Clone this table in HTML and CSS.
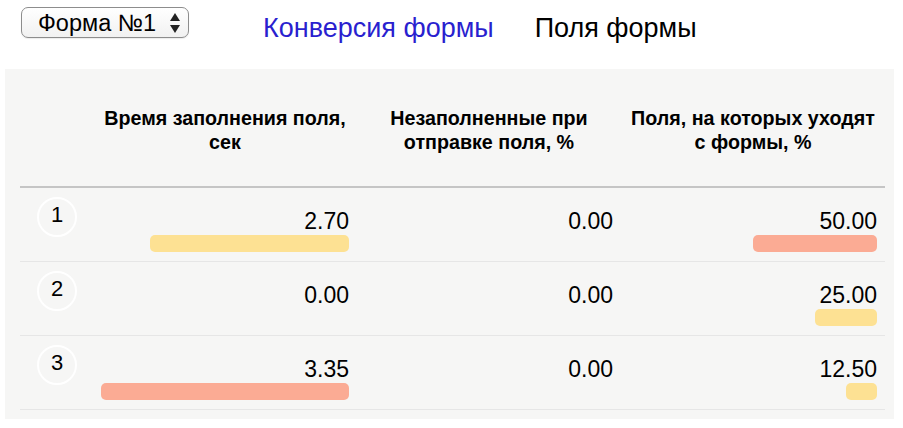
FILE: index.html
```html
<!DOCTYPE html>
<html lang="ru">
<head>
<meta charset="utf-8">
<title>Поля формы</title>
<link rel="stylesheet" href="styles.css">
</head>
<body>
<div class="topbar">
  <div class="select">
    <span class="select-label">Форма №1</span>
    <svg class="select-arrows" width="10" height="20" viewBox="0 0 10 20"><path d="M5 0 L10 8 L0 8 Z" fill="#222"/><path d="M0 12 L10 12 L5 20 Z" fill="#222"/></svg>
  </div>
  <a class="tab tab-link" href="#">Конверсия формы</a>
  <span class="tab tab-active">Поля формы</span>
</div>
<div class="panel">
  <div class="grid head">
    <div></div>
    <div class="th">Время заполнения поля,<br>сек</div>
    <div class="th">Незаполненные при<br>отправке поля, %</div>
    <div class="th">Поля, на которых уходят<br>с формы, %</div>
  </div>
  <div class="grid row">
    <div class="num-cell"><span class="num">1</span></div>
    <div class="cell"><div class="val">2.70</div><div class="bar yellow" style="width:199px"></div></div>
    <div class="cell"><div class="val">0.00</div></div>
    <div class="cell"><div class="val">50.00</div><div class="bar salmon" style="width:124px"></div></div>
  </div>
  <div class="grid row">
    <div class="num-cell"><span class="num">2</span></div>
    <div class="cell"><div class="val">0.00</div></div>
    <div class="cell"><div class="val">0.00</div></div>
    <div class="cell"><div class="val">25.00</div><div class="bar yellow" style="width:62px"></div></div>
  </div>
  <div class="grid row">
    <div class="num-cell"><span class="num">3</span></div>
    <div class="cell"><div class="val">3.35</div><div class="bar salmon" style="width:248px"></div></div>
    <div class="cell"><div class="val">0.00</div></div>
    <div class="cell"><div class="val">12.50</div><div class="bar yellow" style="width:31px"></div></div>
  </div>
</div>
</body>
</html>
```
FILE: styles.css
```css
html, body {
  margin: 0;
  padding: 0;
  background: #ffffff;
}
body {
  font-family: "Liberation Sans", Arial, sans-serif;
  color: #000;
}
.topbar {
  display: flex;
  align-items: flex-start;
  height: 69px;
  box-sizing: border-box;
  padding: 7px 0 0 21px;
}
.select {
  display: flex;
  align-items: center;
  justify-content: space-between;
  box-sizing: border-box;
  width: 168px;
  height: 31px;
  padding: 1px 8px 0 16px;
  border: 1px solid #8d8d8d;
  border-radius: 7px;
  background: linear-gradient(#ffffff, #f1f1f1);
  box-shadow: 0 1px 1px rgba(0,0,0,0.08);
}
.select-label {
  font-size: 23.5px;
  line-height: 27px;
}
.select-arrows {
  display: block;
}
.tab {
  font-size: 27px;
  line-height: 30px;
  margin-top: 6px;
  text-decoration: none;
}
.tab-link {
  color: #2a1fcf;
  margin-left: 74px;
}
.tab-active {
  color: #000;
  margin-left: 41px;
}
.panel {
  margin: 0 9px 0 5px;
  background: #f6f6f5;
  padding: 0 9px 9px 15px;
}
.grid {
  display: grid;
  grid-template-columns: 73px repeat(3, 264px);
}
.head {
  padding: 38px 0 32px;
  border-bottom: 2px solid #c5c5c5;
}
.th {
  text-align: center;
  font-weight: bold;
  font-size: 19.7px;
  line-height: 23.5px;
}
.row {
  height: 74px;
  box-sizing: border-box;
  border-bottom: 1px solid #e6e6e6;
}
.num-cell {
  padding: 9px 0 0 17px;
}
.num {
  display: flex;
  align-items: center;
  justify-content: center;
  box-sizing: border-box;
  width: 40px;
  height: 40px;
  border: 2px solid #ffffff;
  border-radius: 50%;
  font-size: 22px;
  padding-bottom: 4px;
}
.cell {
  display: flex;
  flex-direction: column;
  align-items: flex-end;
  padding: 21px 8px 0;
}
.val {
  font-size: 23px;
  line-height: 24px;
}
.bar {
  height: 17px;
  margin-top: 2px;
  border-radius: 5px;
}
.yellow { background: #fde193; }
.salmon { background: #fbab94; }
```
